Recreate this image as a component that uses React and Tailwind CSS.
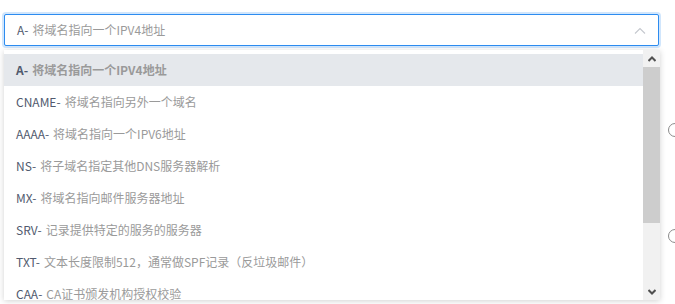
const ITEMS = [
  { code: 'A', desc: '将域名指向一个IPV4地址' },
  { code: 'CNAME', desc: '将域名指向另外一个域名' },
  { code: 'AAAA', desc: '将域名指向一个IPV6地址' },
  { code: 'NS', desc: '将子域名指定其他DNS服务器解析' },
  { code: 'MX', desc: '将域名指向邮件服务器地址' },
  { code: 'SRV', desc: '记录提供特定的服务的服务器' },
  { code: 'TXT', desc: '文本长度限制512，通常做SPF记录（反垃圾邮件）' },
  { code: 'CAA', desc: 'CA证书颁发机构授权校验' },
]

const FONT = { fontFamily: '"Microsoft YaHei", "Noto Sans CJK SC", "Noto Sans", sans-serif' }

function Option({ item, selected }) {
  return (
    <li
      className={`flex h-8 shrink-0 items-center px-3 text-[12px] ${
        selected ? 'bg-[#e5e8ec] font-bold' : ''
      }`}
    >
      <span className="text-[#515a6e]">{item.code}-</span>
      <span className="ml-1 text-[#9a9a9a]">{item.desc}</span>
    </li>
  )
}

function ScrollBar() {
  return (
    <div className="flex w-[17px] shrink-0 flex-col bg-[#f1f1f1]">
      <div className="flex h-[17px] items-center justify-center">
        <svg width="8" height="6" viewBox="0 0 8 6">
          <path d="M0.5 5 L4 1.5 L7.5 5" fill="none" stroke="#505050" strokeWidth="2" />
        </svg>
      </div>
      <div className="h-[156px] bg-[#cdcdcd]" />
      <div className="flex-1" />
      <div className="flex h-[17px] items-center justify-center">
        <svg width="8" height="6" viewBox="0 0 8 6">
          <path d="M0.5 1 L4 4.5 L7.5 1" fill="none" stroke="#505050" strokeWidth="2" />
        </svg>
      </div>
    </div>
  )
}

export default function App() {
  return (
    <div className="relative flex h-[304px] w-[675px] overflow-hidden bg-white" style={FONT}>
      <div className="relative ml-[4px] w-[655px] shrink-0 pt-[14px]">
        <div className="flex h-8 items-center justify-between rounded-[2px] border border-[#2d8cf0] bg-white pl-3 pr-3 shadow-[0_0_0_2px_rgba(45,140,240,0.22)]">
          <span className="text-[12px]">
            <span className="text-[#515a6e]">A-</span>
            <span className="ml-1 text-[#9a9a9a]">将域名指向一个IPV4地址</span>
          </span>
          <svg width="12" height="7" viewBox="0 0 12 7">
            <path d="M1 6.5 L6 1.5 L11 6.5" fill="none" stroke="#c5c8ce" strokeWidth="1.1" />
          </svg>
        </div>

        <div className="absolute left-0 top-[50px] flex h-[250px] w-[656px] bg-white shadow-[0_1px_6px_rgba(0,0,0,0.18)]">
          <ul className="flex flex-1 flex-col overflow-hidden pt-1">
            {ITEMS.map((item, i) => (
              <Option key={item.code} item={item} selected={i === 0} />
            ))}
          </ul>
          <ScrollBar />
        </div>
      </div>

      <div className="ml-[9px] flex flex-col gap-[92px] pt-[123px]">
        <span className="h-[14px] w-[14px] shrink-0 rounded-full border border-[#8a8a8a]" />
        <span className="h-[14px] w-[14px] shrink-0 rounded-full border border-[#8a8a8a]" />
      </div>
    </div>
  )
}
